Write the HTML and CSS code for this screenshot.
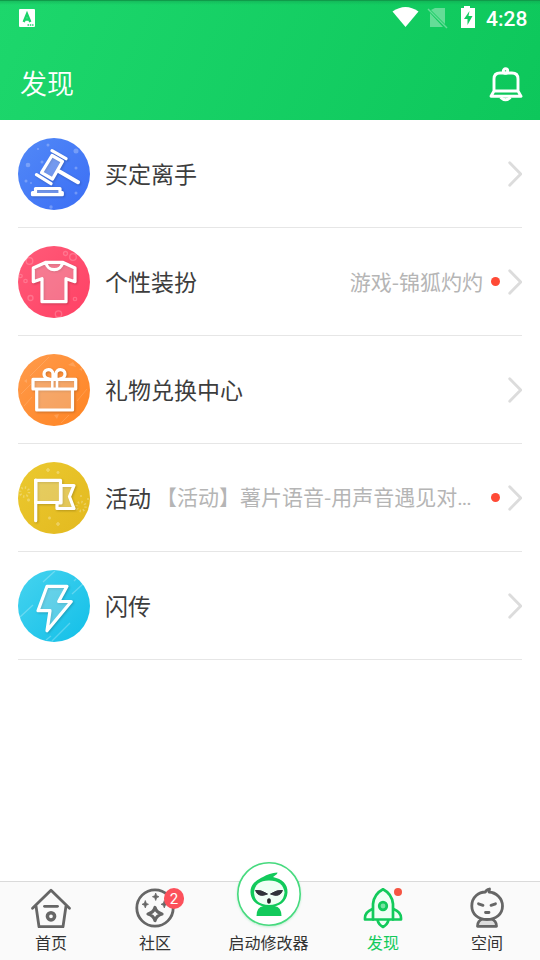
FILE: index.html
```html
<!DOCTYPE html>
<html lang="zh-CN">
<head>
<meta charset="utf-8">
<title>发现</title>
<link rel="stylesheet" href="styles.css">
</head>
<body>
<div class="app">
  <header class="header">
    <div class="status">
      <svg class="status-app" width="16" height="18" viewBox="0 0 16 18"><rect width="16" height="18" rx="1" fill="#fff"/><path d="M4.700 13 8 5l3.300 8M5.700 10.500h4.600" fill="none" stroke="#1bd369" stroke-width="2.400"/><path d="M8.500 16h6" stroke="#1bd369" stroke-width="1.500" stroke-dasharray="1.500 .8"/></svg>
      <svg class="status-icons" width="84" height="24" viewBox="0 0 84 24"><path d="M.5 5.500Q13.500-3.500 26.500 5.500L13.500 21Z" fill="#fff"/><g opacity=".35"><path d="M43 2h10v16L39 4ZM38 7l13 14H38Z" fill="#fff"/><path d="m36 3 19 19" stroke="#fff" stroke-width="1.500"/></g><path d="M69 2h3V0h6v2h5v20H69Z" fill="#fff"/><path d="m77.500 5-5.500 8h3.500v6l5-9h-4Z" fill="#12cb61"/></svg>
      <span class="clock">4:28</span>
    </div>
    <div class="titlebar">
      <h1 class="title">发现</h1>
      <svg class="bell" width="34" height="36" viewBox="0 0 34 36" fill="none" stroke="#fff" stroke-width="2.900" stroke-linejoin="round"><circle cx="16.500" cy="4" r="2.200"/><path d="M5 24V12q0-6 6-6h12q6 0 6 6v12M5 24h24l3 5.300H2Z"/><path d="M11.500 30.500q5 4.500 10 0"/></svg>
    </div>
  </header>
  <main class="list">
    <div class="row">
      <svg class="icon" viewBox="0 0 72 72"><defs><linearGradient id="g1" x2="1" y2="1"><stop stop-color="#5289f7"/><stop offset="1" stop-color="#3b6ef5"/></linearGradient></defs><circle cx="36" cy="36" r="36" fill="url(#g1)"/><g fill="#fff" opacity=".25"><circle cx="58" cy="13" r="2.500"/><circle cx="10" cy="27" r="2.300"/><circle cx="30" cy="7" r="1.500"/><circle cx="24" cy="24" r="1.500"/><circle cx="58" cy="30" r="1.500"/><circle cx="8" cy="43" r="1.500"/><circle cx="33" cy="69" r="1.700"/><circle cx="58" cy="55" r="1.500"/><circle cx="20" cy="11" r="1"/><circle cx="13" cy="45" r="1"/></g><g class="lines"><path class="tint" d="M34 17.500 44.500 23.500 34.500 41 23.500 34.700Z"/><path d="m34 12.700 14 8M18.500 36.700l14.500 9"/><path stroke-width="4" d="m41.500 33.500 18.500 10.700"/><path class="tint" d="M17.500 50.500H42V54.500H44.300V56.700H14.500V54.500H17.500Z"/></g></svg>
      <span class="label">买定离手</span><span class="note"></span>
      <svg class="chevron" viewBox="0 0 16 28"><path d="m3.700 2.800 11 11.200L3.700 25.200"/></svg>
    </div>
    <div class="row">
      <svg class="icon" viewBox="0 0 72 72"><defs><linearGradient id="g2" x2="1" y2="1"><stop stop-color="#ff5b79"/><stop offset="1" stop-color="#ff4064"/></linearGradient></defs><circle cx="36" cy="36" r="36" fill="url(#g2)"/><g fill="none" stroke="#fff" stroke-width="1.300" opacity=".2"><circle cx="11.500" cy="15" r="3.300"/><circle cx="55" cy="11" r="3.300"/><circle cx="47.500" cy="7.500" r="2"/><circle cx="40.500" cy="68" r="3.200"/><circle cx="12.500" cy="52" r="2.500"/><circle cx="57" cy="53" r="1.700"/><circle cx="7.500" cy="35" r="1.700"/><circle cx="2.500" cy="30" r="1.700"/></g><path class="lines tint" d="M28 16.300 15.300 22V35.700L24 32.700V55.700H48V32.700L57 35.700V22L44.500 16.300ZM28 16.300C29 26 43.500 26 44.500 16.300"/></svg>
      <span class="label">个性装扮</span><span class="note">游戏-锦狐灼灼</span><i class="dot"></i>
      <svg class="chevron" viewBox="0 0 16 28"><path d="m3.700 2.800 11 11.200L3.700 25.200"/></svg>
    </div>
    <div class="row">
      <svg class="icon" viewBox="0 0 72 72"><defs><linearGradient id="g3" x2="1" y2="1"><stop stop-color="#ff9b4c"/><stop offset="1" stop-color="#ff8422"/></linearGradient></defs><circle cx="36" cy="36" r="36" fill="url(#g3)"/><path d="m12 22 19-19M3 40 13 30M6 52l8-9M59 47l10-12M43 69l8-8" stroke="#fff" opacity=".14"/><path d="m50 11 5-3 3 5ZM36 61l5-1-2 5ZM61 15l3-1v3ZM6 27l3-2v4Z" fill="#fff" opacity=".16"/><g class="lines"><path class="tint" d="M18.700 35H54.500V56H18.700ZM15 25.300H57.700V35H15Z"/><path d="M34.300 25v9M39 25v9" stroke-linecap="butt" stroke-width="2.500"/><path d="M31 25q-5-1-5-5c0-5.500 9-6 9 0v5M42 25q5-1 5-5c0-5.500-9-6-9 0v5"/></g></svg>
      <span class="label">礼物兑换中心</span><span class="note"></span>
      <svg class="chevron" viewBox="0 0 16 28"><path d="m3.700 2.800 11 11.200L3.700 25.200"/></svg>
    </div>
    <div class="row">
      <svg class="icon" viewBox="0 0 72 72"><defs><linearGradient id="g4" x2="1" y2="1"><stop stop-color="#ebc92f"/><stop offset="1" stop-color="#e3b91f"/></linearGradient></defs><circle cx="36" cy="36" r="36" fill="url(#g4)"/><g fill="none" stroke="#fff" stroke-width="1.600" opacity=".28"><path d="M28 8h4M30 6v4M38.500 10.500h3M40 9v3M38 62h4M40 60v4M30 56h3M31.500 54.500v3M9 38h3M10.500 36.500v3M62 34h2M69 37h2"/><circle cx="6.500" cy="30" r="4.500" stroke-width="2.500" stroke-dasharray="1.300 2.200"/><circle cx="63" cy="44.500" r="4.500" stroke-width="2.500" stroke-dasharray="1.300 2.200"/></g><g class="lines"><path class="tint" d="M43 23.500H56L51.500 34.700 56 46.500H39V41H43Z"/><path class="tint" d="M17.700 18.300H42.500V40.500H17.700Z"/><path d="M17.700 18V58.700"/></g></svg>
      <span class="label">活动</span><span class="note note-wide">【活动】薯片语音-用声音遇见对<span class="dots">...</span></span><i class="dot"></i>
      <svg class="chevron" viewBox="0 0 16 28"><path d="m3.700 2.800 11 11.200L3.700 25.200"/></svg>
    </div>
    <div class="row">
      <svg class="icon" viewBox="0 0 72 72"><defs><linearGradient id="g5" x2="1" y2="1"><stop stop-color="#46d3ef"/><stop offset="1" stop-color="#12bfe8"/></linearGradient></defs><circle cx="36" cy="36" r="36" fill="url(#g5)"/><path d="M25 12 37 1M2 47 15 35M34 71l18-18M54 24 65 14M28 70l5-4M56 11l2-2" stroke="#fff" stroke-width="1.300" opacity=".25"/><path class="lines tint" d="M29 16.300H49L40.700 31.500H53.300L29 60.700 32 40.700H20Z"/></svg>
      <span class="label">闪传</span><span class="note"></span>
      <svg class="chevron" viewBox="0 0 16 28"><path d="m3.700 2.800 11 11.200L3.700 25.200"/></svg>
    </div>
  </main>
  <nav class="nav">
    <div class="tab">
      <svg class="tab-icon" viewBox="0 0 44 44"><g class="gray"><path d="M3.500 22.300 22 4.200 40.500 22.300M7 20 10 40.700H34L37 20"/><path d="M15.500 20.300H28.500"/><circle cx="22" cy="30.300" r="3.600" stroke-width="3.500"/></g></svg>
      <span>首页</span>
    </div>
    <div class="tab">
      <svg class="tab-icon" viewBox="0 0 44 44"><circle class="gray" cx="22" cy="22" r="18.200"/><path d="M22 21.500q1.500 5 7 6.500-5.500 1.500-7 6.500-1.500-5-7-6.500Q20.500 26.500 22 21.500Z" fill="none" stroke="#666" stroke-width="3.200" stroke-linejoin="round"/><path d="m22.700 7 1 2.700 2.300 1-2.300 1-1 2.800-1-2.800-2.300-1 2.300-1ZM12.300 14.500l1 2.800 2.200 1-2.200 1-1 2.700-1-2.700-2.300-1 2.300-1ZM31.300 14.500l1 2.800 2.200 1-2.200 1-1 2.700-1-2.700-2.300-1 2.300-1Z" fill="#666" stroke="#666" stroke-width=".7"/></svg>
      <b class="badge">2</b>
      <span>社区</span>
    </div>
    <div class="tab tab-main">
      <svg class="main-icon" viewBox="0 0 70 70"><circle cx="35" cy="35" r="31.200" fill="#fff" stroke="#46da7e" stroke-width="1.600"/><path d="M22.500 57q0-9 7-10h11q7 1 7 10Z" fill="#12ca5b"/><path d="M16.500 33.500C16 24 25 20 29 18q6-4 14.500-4.500l-.5 1.500-4 3c9 2 15 7 14.500 15.500-.5 9-8 14.500-18.500 14.500S17 42.500 16.500 33.500Z" fill="#12ca5b"/><path d="M20 33.500Q21 21.500 35 21.500t15.500 12Q49.500 45.500 35 46 20.500 45.500 20 33.500Z" fill="#effff5"/><path d="M21.500 31.500q5-1 12 3.500-9 4-12-3.500ZM48.500 31.500q-5-1-12 3.500 9 4 12-3.500Z" fill="#30333a" stroke="#30333a"/><ellipse cx="35" cy="42" rx="1.900" ry="2.800" fill="#25272b"/></svg>
      <span>启动修改器</span>
    </div>
    <div class="tab active">
      <svg class="tab-icon" viewBox="0 0 44 44" fill="#effff5" stroke="#12ca5b" stroke-width="2.700" stroke-linejoin="round"><path d="M11.500 23Q4 26 4 32v1.500h9M32.500 23Q40 26 40 32v1.500h-9M16.500 34q1 4.500 5.500 7 4.500-2.500 5.500-7"/><path d="M22 3.300Q13 8 12 18v15.500H32V18Q31 8 22 3.300Z"/><circle cx="22" cy="20" r="3.800" fill="#75e3a1"/></svg>
      <b class="point"></b>
      <span>发现</span>
    </div>
    <div class="tab">
      <svg class="tab-icon" viewBox="0 0 44 44"><g class="gray"><path d="M12.500 40.300q0-6 5.500-7.300h8q5.500 1.300 5.500 7.300Z" fill="#ddd"/><path d="M6.800 20C6.800 10.500 14 6 20.500 6q.5-2.300 4-3L24 6C31 6.500 37.500 12 37.500 20S31 33.500 22 33.500 6.800 28 6.800 20Z" fill="#fafafa"/><path d="m13.500 17.800 4.500 1.500M30.500 17.800l-4.500 1.500M20.500 26.500h3.500"/></g></svg>
      <span>空间</span>
    </div>
  </nav>
</div>
</body>
</html>
```
FILE: styles.css
```css
* { box-sizing: border-box; }
body {
  margin: 0;
  font-family: "Noto Sans CJK SC", sans-serif;
  background: #fff;
}
.app {
  display: flex;
  flex-direction: column;
  width: 540px;
  height: 960px;
  overflow: hidden;
}
.header {
  height: 120px;
  flex: none;
  background:
    linear-gradient(#109b4a 1px, #119b4c66 1px, #119b4c00 5px),
    linear-gradient(115deg, #1dd76c, #0dc75b);
  color: #fff;
}
.status {
  display: flex;
  align-items: flex-start;
  height: 48px;
  padding: 6px 12px 0 19px;
}
.status-app { margin-top: 3px; }
.status-icons { margin-left: auto; }
.clock {
  width: 42px;
  margin-left: 10px;
  font: 500 21px/26px Roboto, sans-serif;
  white-space: nowrap;
}
.titlebar {
  display: flex;
  align-items: center;
  justify-content: space-between;
  height: 72px;
  padding: 0 17px 0 20px;
}
.title {
  margin: 0 0 2px;
  font-size: 27px;
  font-weight: 350;
  line-height: 40px;
}
.bell { margin-top: 2px; }
.list {
  flex: 1;
  padding: 0 18px;
}
.row {
  display: flex;
  align-items: center;
  height: 108px;
  border-bottom: 1px solid #e6e6e6;
}
.icon {
  width: 72px;
  height: 72px;
  flex: none;
}
.lines {
  fill: none;
  stroke: #fff;
  stroke-width: 3.2;
  stroke-linejoin: round;
  stroke-linecap: round;
  filter: drop-shadow(1px 1px 1px #0003);
}
.tint { fill: #ffffff40; }
.label {
  margin-left: 15px;
  margin-bottom: 2px;
  font-size: 23px;
  line-height: 34px;
  color: #3d3d3d;
  white-space: nowrap;
}
.note {
  flex: 1;
  min-width: 0;
  margin-bottom: 2px;
  font-size: 21px;
  line-height: 32px;
  color: #b5b5b5;
  text-align: right;
  white-space: nowrap;
}
.note-wide {
  margin-left: 5px;
  text-align: left;
}
.dots {
  font-family: Roboto, sans-serif;
  letter-spacing: -1px;
}
.dot {
  width: 9px;
  height: 9px;
  flex: none;
  margin: 0 6px 0 8px;
  border-radius: 50%;
  background: #ff4a36;
}
.chevron {
  width: 16px;
  height: 28px;
  flex: none;
  fill: none;
  stroke: #dcdcdc;
  stroke-width: 2.8;
  stroke-linecap: round;
}
.nav {
  display: grid;
  grid-template-columns: 102px 106px 121px 108px 100px;
  height: 79px;
  flex: none;
  background: #fafafa;
  border-top: 1px solid #dadada;
}
.tab {
  position: relative;
  display: flex;
  flex-direction: column;
  align-items: center;
  padding-top: 4px;
  font-size: 16px;
  line-height: 24px;
  color: #333;
}
.tab-icon {
  width: 44px;
  height: 44px;
}
.gray {
  fill: none;
  stroke: #666;
  stroke-width: 2.8;
  stroke-linecap: round;
  stroke-linejoin: round;
}
.active { color: #12ca5b; }
.main-icon {
  width: 70px;
  height: 70px;
  margin-top: -27px;
  margin-bottom: 1px;
  filter: drop-shadow(0 1px 1px #12ca5b40);
}
.badge {
  position: absolute;
  left: 62px;
  top: 6px;
  width: 20px;
  height: 21px;
  border-radius: 10px;
  background: #fc505b;
  color: #fff;
  font: 15px/22px Roboto, sans-serif;
  text-align: center;
}
.point {
  position: absolute;
  left: 65px;
  top: 6px;
  width: 8px;
  height: 8px;
  border-radius: 50%;
  background: #f55442;
}
```
